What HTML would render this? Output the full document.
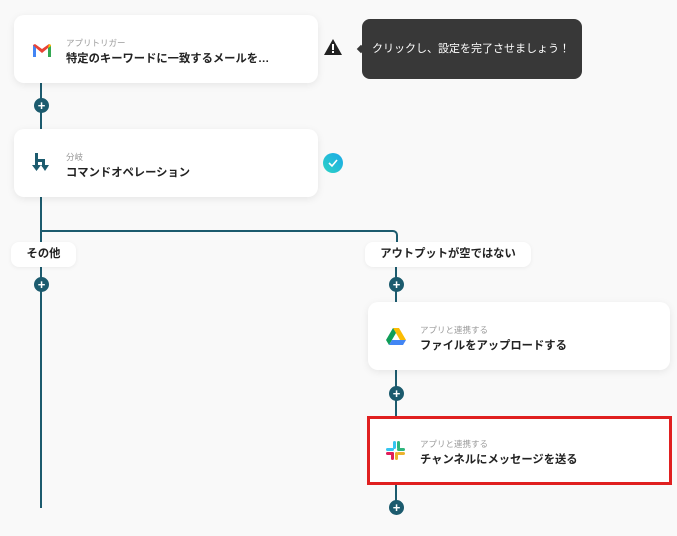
<!DOCTYPE html><html><head><meta charset="utf-8"><style>
*{margin:0;padding:0;box-sizing:border-box}
body{width:677px;height:536px;background:#f9f9f9;position:relative;overflow:hidden;font-family:"Liberation Sans","Noto Sans CJK JP",sans-serif}
.a{position:absolute}
.card{position:absolute;background:#fff;border-radius:10px;box-shadow:0 2px 8px rgba(0,0,0,.08)}
.sm{position:absolute;font-size:8.5px;color:#9a9a9a;white-space:nowrap}
.tt{position:absolute;font-size:11.3px;font-weight:bold;color:#222;white-space:nowrap}
.v{position:absolute;background:#1c5b6e;width:2px}
.p{position:absolute;width:15px;height:15px;border-radius:50%;background:#1c5b6e;color:#fff;font-size:13px;line-height:15px;text-align:center;font-weight:bold}
.lab{position:absolute;background:#fff;border-radius:8px;font-size:11.3px;font-weight:bold;color:#222;text-align:center;line-height:25px;box-shadow:0 1px 4px rgba(0,0,0,.06);white-space:nowrap}
</style></head><body>
<div class="v" style="left:40px;top:80px;height:52px"></div>
<div class="v" style="left:40px;top:195px;height:313px"></div>
<div class="a" style="left:40px;top:230px;width:358px;height:14px;border-top:2px solid #1c5b6e;border-right:2px solid #1c5b6e;border-top-right-radius:5px"></div>
<div class="v" style="left:395px;top:260px;height:250px"></div>

<div class="card" style="left:14px;top:15px;width:304px;height:68px"></div>
<svg class="a" style="left:32px;top:42px" width="20" height="16" viewBox="0 0 20 16"><path d="M1 3v12h3V6l6 5 6-5v9h3V3l-2-1-7 5-7-5z" fill="#ea4335"/><path d="M1 3v12h3V6z" fill="#4285f4"/><path d="M16 6v9h3V3z" fill="#34a853"/><path d="M19 3l-2-1-1 4 3-2z" fill="#fbbc04"/></svg>
<div class="sm" style="left:66px;top:37px">アプリトリガー</div>
<div class="tt" style="left:66px;top:50px">特定のキーワードに一致するメールを…</div>

<div class="card" style="left:14px;top:129px;width:304px;height:68px"></div>
<svg class="a" style="left:32px;top:153px" width="20" height="20" viewBox="0 0 20 20" fill="#1c5b6e"><rect x="3" y="0" width="3" height="14"/><path d="M3 6h10v8h-3V9H6z"/><path d="M0 12h9l-4.5 6zM9 12h8l-4 6z"/></svg>
<div class="sm" style="left:66px;top:151px">分岐</div>
<div class="tt" style="left:66px;top:164px">コマンドオペレーション</div>

<svg class="a" style="left:323px;top:38px" width="20" height="18" viewBox="0 0 20 18"><path d="M10 1L19 17H1z" fill="#222"/><rect x="9" y="6" width="2" height="6" fill="#fff"/><rect x="9" y="13" width="2" height="2" fill="#fff"/></svg>
<div class="a" style="left:362px;top:19px;width:220px;height:60px;background:#383838;border-radius:8px;color:#fff;font-size:11px;line-height:60px;padding-left:10px;white-space:nowrap">クリックし、設定を完了させましょう！</div>
<div class="a" style="left:358px;top:46px;width:6px;height:6px;background:#383838;transform:rotate(45deg)"></div>
<svg class="a" style="left:323px;top:153px" width="20" height="20" viewBox="0 0 20 20"><defs><linearGradient id="g" x1="0" y1="1" x2="1" y2="0"><stop offset="0" stop-color="#2dd4c4"/><stop offset="1" stop-color="#1aa8e8"/></linearGradient></defs><circle cx="10" cy="10" r="10" fill="url(#g)"/><path d="M6 10l3 3 5-6" stroke="#fff" stroke-width="1.6" fill="none"/></svg>

<div class="p" style="left:34px;top:98px">+</div>
<div class="lab" style="left:11px;top:242px;width:65px">その他</div>
<div class="p" style="left:34px;top:277px">+</div>
<div class="lab" style="left:365px;top:242px;width:166px">アウトプットが空ではない</div>
<div class="p" style="left:389px;top:277px">+</div>

<div class="card" style="left:368px;top:302px;width:302px;height:68px"></div>
<svg class="a" style="left:386px;top:328px" width="20" height="17" viewBox="0 0 20 17"><path d="M7 0h6l7 12h-6z" fill="#fbbc04"/><path d="M7 0L0 12l3 5 7-12z" fill="#0f9d58"/><path d="M3 17h14l3-5H6z" fill="#4285f4"/></svg>
<div class="sm" style="left:420px;top:324px">アプリと連携する</div>
<div class="tt" style="left:420px;top:337px">ファイルをアップロードする</div>
<div class="p" style="left:389px;top:386px">+</div>

<div class="a" style="left:367px;top:416px;width:305px;height:69px;background:#fff;border:3px solid #e02020"></div>
<svg class="a" style="left:386px;top:441px" width="19" height="19" viewBox="0 0 19 19"><rect x="7" y="0" width="3" height="8" rx="1.5" fill="#36c5f0"/><rect x="0" y="7" width="8" height="3" rx="1.5" fill="#36c5f0"/><rect x="11" y="7" width="8" height="3" rx="1.5" fill="#2eb67d"/><rect x="11" y="0" width="3" height="8" rx="1.5" fill="#2eb67d"/><rect x="9" y="11" width="3" height="8" rx="1.5" fill="#ecb22e"/><rect x="11" y="11" width="8" height="3" rx="1.5" fill="#ecb22e"/><rect x="0" y="11" width="8" height="3" rx="1.5" fill="#e01e5a"/><rect x="5" y="11" width="3" height="8" rx="1.5" fill="#e01e5a"/></svg>
<div class="sm" style="left:420px;top:438px">アプリと連携する</div>
<div class="tt" style="left:420px;top:451px">チャンネルにメッセージを送る</div>
<div class="p" style="left:389px;top:500px">+</div>
</body></html>
